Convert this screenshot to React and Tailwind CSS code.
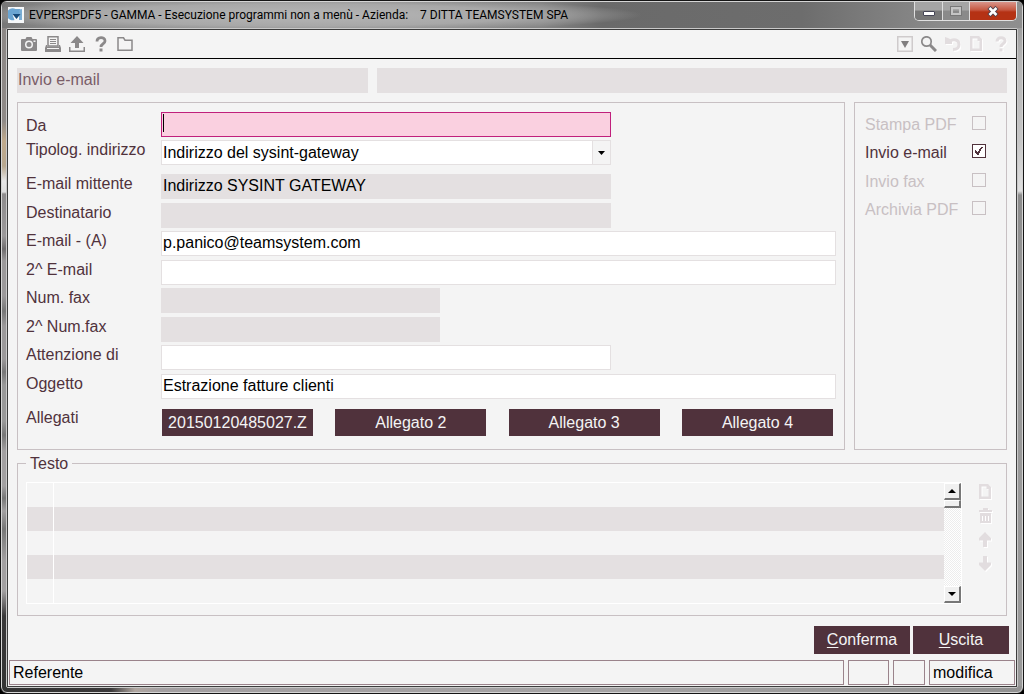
const frameBg =
  "bg-[linear-gradient(90deg,#333_0,#3b393a_110px,#b0a6a0_134px,#a39fa1_160px,#a5a3a4_60%,#929292_100%),linear-gradient(180deg,#8b8786_0,#8f8a87_120px,#c0aa8c_140px,#b8a890_165px,#e6e6e6_180px,#dedede_191px,#8e8c8d_193px,#9b999a_235px,#6f6d6e_248px,#9b999a_260px,#9b999a_295px,#777_310px,#9b999a_325px,#9b999a_358px,#777_371px,#999_384px,#999_420px,#777_434px,#a2a0a1_450px,#a2a0a1_485px,#777_497px,#a2a0a1_510px,#777_528px,#a2a0a1_560px,#a2a0a1_590px,#3a393a_615px,#333_100%),linear-gradient(180deg,#8c8c8c_0,#b5b5b5_60px,#c6c6c6_140px,#e0e0e0_190px,#8c8c8c_194px,#999_300px,#9a9a9a_100%)] bg-[length:100%_7px,8px_100%,100%_100%] bg-[position:bottom_left,top_left,top_left] bg-no-repeat";

const titleBg =
  "bg-[radial-gradient(ellipse_340px_17px_at_300px_13px,#b6b6b6_0,#a8a8a8_65%,transparent_100%),linear-gradient(90deg,#777_0,#8b8b8b_60px,#858585_540px,#6a6a6a_600px,#6d6d6d_800px,#8b8b8b_940px,#8e8e8e_100%)]";

const field = "h-[25px] min-w-0 border border-[#e4e0e1] bg-white pl-px text-black outline-none";
const readOnlyField = "h-[25px] min-w-0 bg-[#e4e0e1] pl-0.5 text-black outline-none";
const darkButton = "bg-[#50323c] text-center text-[#f4f4f4]";

const widths = {
  medium: "w-[450px]",
  small: "w-[279px]",
  full: "flex-1",
};

function Row({ id, label, gap = "mt-[3px]", low = false, children }) {
  return (
    <div className={`flex ${low ? "items-end" : "items-start"} ${gap}`}>
      <label htmlFor={id} className={`w-[135px] shrink-0 text-[#50323c] ${low ? "leading-[22px]" : "leading-[19px]"}`}>
        {label}
      </label>
      {children}
    </div>
  );
}

function TextRow({ id, label, gap, value = "", width = "full", readOnly = false }) {
  return (
    <Row id={id} label={label} gap={gap}>
      <input
        id={id}
        type="text"
        defaultValue={value}
        readOnly={readOnly}
        className={`${readOnly ? readOnlyField : field} pb-0.5 ${widths[width]}`}
      />
    </Row>
  );
}

function Option({ id, label, checked = false, gap = "" }) {
  return (
    <div className={`flex h-[25px] items-end ${gap}`}>
      <label htmlFor={id} className={`w-[107px] ${checked ? "text-[#50323c]" : "text-[#c8c0c3]"}`}>
        {label}
      </label>
      <span className="relative mb-[7px] flex">
        <input
          id={id}
          type="checkbox"
          defaultChecked={checked}
          disabled={!checked}
          className={`size-3.5 appearance-none border ${checked ? "border-[#50323c] bg-white" : "border-[#c8c0c3]"}`}
        />
        {checked && (
          <svg className="pointer-events-none absolute inset-0" width="14" height="14" viewBox="0 0 14 14">
            <path d="M3 6h1v1h1v1h1v-1h1v-2h1v-1h1v-1h2v1h-1v1h-1v2h-1v2h-1v2h-2v-1h-1v-1h-1z" fill="#50323c" />
          </svg>
        )}
      </span>
    </div>
  );
}

function Icon({ children, label, size = 16 }) {
  return (
    <button type="button" aria-label={label} className="block shrink-0">
      <svg width={size} height={size} viewBox="0 0 16 16" fill="none">
        {children}
      </svg>
    </button>
  );
}

const PAGE = "M1 0h9l3 3v12H1zM3.500 2.500v10h7V5H8.500V2.500z";

function PageIcon({ label }) {
  return (
    <Icon label={label}>
      <path d={PAGE} fill="#fff" fillRule="evenodd" transform="translate(1 1)" />
      <path d={PAGE} fill="#e2dddf" fillRule="evenodd" />
    </Icon>
  );
}

const UNDO = "M5 5.500C8 2.500 14 3.500 14 8.500C14 12 11.500 13.500 8 13.500";
const UNDO_HEAD = "M0 1l3 1l4 2v4H0z";
const HELP = "M4 5.500C4 0.500 12 0.500 12 5C12 8 8 7.500 8 11";
const TRASH = "M1 2h4V0h5v2h4v2H1zM2 5h11v10H2z";
const UP = "M7 0L13 6V8.500H9V15H5V8.500H1V6z";
const DOWN = "M7 15L13 9V6.500H9V0H5V6.500H1V9z";

function Toolbar() {
  return (
    <div className="flex h-[29px] items-center justify-between border-b border-black pr-[7px] pl-[13px]">
      <div className="flex gap-2">
        <Icon label="Cattura">
          <path fillRule="evenodd" fill="#8b898a" d="M1 3h3.500l1-2h5l1 2H15q1 0 1 1v10q0 1-1 1H1q-1 0-1-1V4q0-1 1-1zM8 4.500a4 4 0 1 0 0 8a4 4 0 1 0 0-8zM8 6a2.500 2.500 0 1 1 0 5a2.500 2.500 0 1 1 0-5z" />
          <path d="M12.500 4.500h2v1.500h-2z" fill="#f4f4f4" />
        </Icon>
        <Icon label="Stampa">
          <path d="M3 .750h10V10H3z" stroke="#8b898a" strokeWidth="1.500" />
          <path d="M5 3.500h6M5 5.500h6M5 7.500h6" stroke="#8b898a" />
          <path fillRule="evenodd" d="M1 9h1v1.500h12V9h1l1 3v4H0v-4zM2 12v1h12v-1z" fill="#8b898a" />
        </Icon>
        <Icon label="Esporta">
          <path d="M8 0l6.500 7h-4.500V12H6V7H1.500z" fill="#8b898a" />
          <path d="M.750 11v4.250h14.500V11" stroke="#8b898a" strokeWidth="1.500" />
        </Icon>
        <Icon label="Aiuto">
          <path d={HELP} stroke="#8b898a" strokeWidth="2.800" />
          <path d="M6.500 12.500h3V15.500h-3z" fill="#8b898a" />
        </Icon>
        <Icon label="Apri cartella">
          <path d="M1 14.250V1.750H6.500L8 4.250H15V14.250z" stroke="#8b898a" strokeWidth="1.500" />
        </Icon>
      </div>
      <div className="flex gap-2">
        <Icon label="Elenco">
          <path d="M.750.750h14.500v14.500H.750z" stroke="#cfcbcc" strokeWidth="1.500" />
          <path d="M4 5h8L8 12z" fill="#807e7f" />
        </Icon>
        <Icon label="Cerca">
          <circle cx="5.500" cy="5.500" r="4.700" stroke="#8b898a" strokeWidth="1.700" />
          <path d="M8.800 8.800L15 15" stroke="#8b898a" strokeWidth="3" />
        </Icon>
        <Icon label="Annulla">
          <g transform="translate(1 1)">
            <path d={UNDO} stroke="#fff" strokeWidth="3" />
            <path d={UNDO_HEAD} fill="#fff" />
          </g>
          <path d={UNDO} stroke="#e2dddf" strokeWidth="3" />
          <path d={UNDO_HEAD} fill="#e2dddf" />
        </Icon>
        <PageIcon label="Nuovo" />
        <Icon label="Guida">
          <g transform="translate(1 1)">
            <path d={HELP} stroke="#fff" strokeWidth="3" />
            <path d="M6.500 12.500h3V15.500h-3z" fill="#fff" />
          </g>
          <path d={HELP} stroke="#e2dddf" strokeWidth="3" />
          <path d="M6.500 12.500h3V15.500h-3z" fill="#e2dddf" />
        </Icon>
      </div>
    </div>
  );
}

function TitleBar() {
  return (
    <header className={`flex h-[26px] items-start justify-between pr-[5px] pl-1.5 ${titleBg}`}>
      <div className="flex h-[26px] items-center gap-[5px]">
        <svg width="16" height="16" viewBox="0 0 16 16">
          <path d="M0 0h16v16H0z" fill="#f5f7f9" />
          <path d="M7.500 2a6 6 0 1 0-1 11l-2-5.500h7l1-5.500z" fill="#6ba5d2" />
          <path d="M11 3l3-1v11h-3z" fill="#79add5" />
          <path d="M4.500 7h8l-4 5z" fill="#174a79" />
        </svg>
        <h1 className="flex gap-3 font-['Roboto','Open_Sans',sans-serif] text-xs text-black">
          <span>EVPERSPDF5 - GAMMA - Esecuzione programmi non a menù - Azienda:</span>
          <span>7 DITTA TEAMSYSTEM SPA</span>
        </h1>
      </div>
      <div className="flex h-[19px] overflow-hidden rounded-b-[5px] border border-t-0 border-[#e0e0e0]">
        <button type="button" aria-label="Riduci a icona" className="flex w-7 items-end justify-center border-r border-[#ddd] bg-linear-to-b from-[#a5a5a5] from-45% to-[#777] to-50% pb-1">
          <span className="h-[5px] w-3 rounded-[1px] border border-[#454555] bg-white" />
        </button>
        <button type="button" aria-label="Ingrandisci" className="flex w-[27px] items-center justify-center border-r border-[#ddd] bg-linear-to-b from-[#a5a5a5] from-45% to-[#8a8a8a] to-50%">
          <span className="h-2 w-2.5 border-2 border-[#c4c4c4] outline outline-[#777]" />
        </button>
        <button type="button" aria-label="Chiudi" className="flex w-[46px] items-center justify-center bg-linear-to-b from-[#d8948a] from-0% via-[#c5563f] via-45% to-[#b53214] to-55%">
          <svg width="12" height="11" viewBox="0 0 12 11">
            <path d="M2 1.500L10 9.500M10 1.500L2 9.500" stroke="#50424d" strokeWidth="4.500" />
            <path d="M2.500 2L9.500 9M9.500 2L2.500 9" stroke="#fff" strokeWidth="2.500" />
          </svg>
        </button>
      </div>
    </header>
  );
}

function Attachments() {
  return (
    <div className="mt-2.5 flex items-start">
      <span className="w-[136px] shrink-0 leading-[18px] text-[#50323c]">Allegati</span>
      <div className="flex flex-1 justify-between pr-[3px]">
        {["20150120485027.Z", "Allegato 2", "Allegato 3", "Allegato 4"].map((name) => (
          <button key={name} type="button" className={`h-[27px] w-[151px] ${darkButton}`}>
            {name}
          </button>
        ))}
      </div>
    </div>
  );
}

function ScrollButton({ label, children }) {
  return (
    <button type="button" aria-label={label} className="flex h-[17px] w-full items-center justify-center border-t border-r-2 border-b-2 border-l border-t-white border-r-[#777] border-b-[#777] border-l-white bg-[#f0f0f0]">
      {children}
    </button>
  );
}

function TextPanel() {
  return (
    <fieldset className="mt-[3px] min-w-0 border border-[#c8c0c3] pr-3 pb-[11px] pl-2">
      <legend className="px-1 leading-[21px] text-[#50323c]">Testo</legend>
      <div className="mt-2 flex justify-between">
        <div className="mr-4 flex flex-1 border border-white">
          <table className="flex-1 table-fixed border-collapse" aria-label="Testo">
            <tbody className="block">
              {[0, 1, 2, 3, 4].map((n) => (
                <tr key={n} className={`flex h-6 ${n % 2 ? "bg-[#e4e0e1]" : ""}`}>
                  <td className="w-[27px] border-r border-white" />
                  <td className="flex-1" />
                </tr>
              ))}
            </tbody>
          </table>
          <div className="flex w-[17px] flex-col justify-between bg-[repeating-conic-gradient(#ededed_0_25%,#fff_0_50%)] bg-[length:2px_2px]">
            <div>
              <ScrollButton label="Scorri su">
                <svg width="8" height="4" viewBox="0 0 8 4"><path d="M0 4L4 0L8 4z" fill="#000" /></svg>
              </ScrollButton>
              <div className="h-2 border-t border-r-2 border-b-2 border-l border-t-white border-r-[#777] border-b-[#777] border-l-white bg-[#f0f0f0]" />
            </div>
            <ScrollButton label="Scorri giù">
              <svg width="8" height="4" viewBox="0 0 8 4"><path d="M0 0L4 4L8 0z" fill="#000" /></svg>
            </ScrollButton>
          </div>
        </div>
        <div className="flex flex-col gap-2 pt-0.5">
          <PageIcon label="Nuova riga" />
          <Icon label="Elimina riga">
            <path d={TRASH} fill="#fff" transform="translate(1 1)" />
            <path d={TRASH} fill="#e2dddf" />
            <path d="M4.500 8v5M7.500 8v5M10.500 8v5" stroke="#fff" />
          </Icon>
          <Icon label="Sposta su">
            <path d={UP} fill="#fff" transform="translate(1 1)" />
            <path d={UP} fill="#e2dddf" />
          </Icon>
          <Icon label="Sposta giù">
            <path d={DOWN} fill="#fff" transform="translate(1 1)" />
            <path d={DOWN} fill="#e2dddf" />
          </Icon>
        </div>
      </div>
    </fieldset>
  );
}

export default function App() {
  return (
    <div className="flex min-h-screen flex-col bg-black font-['Liberation_Sans',Arial,sans-serif] text-base leading-6">
      <div className={`flex flex-1 flex-col overflow-hidden rounded-[7px] border border-[#151515] ${frameBg}`}>
        <div className="flex flex-1 flex-col rounded-md border border-[#d5d5d5]">
          <TitleBar />
          <div className="mx-1 mb-1 flex flex-1 flex-col rounded-[2px] border border-[#c9c9c9]">
            <div className="flex flex-1 flex-col border border-[#3c3c3c] bg-[#f4f4f4]">
              <Toolbar />
              <main className="flex flex-1 flex-col px-[9px] pt-[9px]">
                <div className="flex gap-[9px]">
                  <div className="h-[25px] w-[351px] bg-[#e4e0e1] pl-px text-[#7a5d68]">Invio e-mail</div>
                  <div className="h-[25px] flex-1 bg-[#e4e0e1]" />
                </div>
                <div className="mt-[9px] flex gap-[9px]">
                  <form className="flex-1 border border-[#c8c0c3] px-2 pt-[9px] pb-[13px]">
                    <Row id="da" label="Da" gap="" low>
                      <span className="relative flex">
                        <input id="da" type="text" className="h-[25px] w-[450px] border border-[#c0207c] bg-[#fad0e0] pl-1 text-black outline-none" />
                        <span className="absolute top-0.5 left-0.5 h-[18px] w-px bg-black" />
                      </span>
                    </Row>
                    <Row id="tipo" label="Tipolog. indirizzo">
                      <span className="relative flex">
                        <select id="tipo" className={`${field} w-[450px] appearance-none`}>
                          <option>Indirizzo del sysint-gateway</option>
                        </select>
                        <span className="pointer-events-none absolute inset-y-px right-px flex w-[18px] items-center justify-center border-l border-[#e4e0e1] bg-[#f4f4f4]">
                          <svg width="7" height="4" viewBox="0 0 7 4"><path d="M0 0h7L3.500 4z" fill="#000" /></svg>
                        </span>
                      </span>
                    </Row>
                    <TextRow id="mittente" label="E-mail mittente" value="Indirizzo SYSINT GATEWAY" width="medium" readOnly gap="mt-[9px]" />
                    <TextRow id="dest" label="Destinatario" width="medium" readOnly gap="mt-1" />
                    <TextRow id="email" label="E-mail - (A)" value="p.panico@teamsystem.com" />
                    <TextRow id="email2" label="2^ E-mail" gap="mt-1" />
                    <TextRow id="fax" label="Num. fax" width="small" readOnly />
                    <TextRow id="fax2" label="2^ Num.fax" width="small" readOnly gap="mt-1" />
                    <TextRow id="att" label="Attenzione di" width="medium" />
                    <TextRow id="ogg" label="Oggetto" value="Estrazione fatture clienti" gap="mt-1" />
                    <Attachments />
                  </form>
                  <aside className="w-[153px] border border-[#c8c0c3] pt-[9px] pl-2.5">
                    <Option id="stampa" label="Stampa PDF" />
                    <Option id="invio" label="Invio e-mail" checked gap="mt-[3px]" />
                    <Option id="invfax" label="Invio fax" gap="mt-1" />
                    <Option id="arch" label="Archivia PDF" gap="mt-[3px]" />
                  </aside>
                </div>
                <TextPanel />
              </main>
              <div className="mt-2.5 flex justify-end gap-[3px] pr-[7px]">
                <button type="button" className={`h-7 w-24 ${darkButton}`}><u className="underline-offset-2">C</u>onferma</button>
                <button type="button" className={`h-7 w-24 ${darkButton}`}><u className="underline-offset-2">U</u>scita</button>
              </div>
              <footer className="mt-1.5 mb-px flex gap-1 px-px text-black">
                <div className="h-[25px] flex-1 border border-[#9a838b] pl-[3px]">Referente</div>
                <div className="h-[25px] w-[41px] border border-[#9a838b]" />
                <div className="h-[25px] w-8 border border-[#9a838b]" />
                <div className="h-[25px] w-[86px] border border-[#9a838b] pl-[3px]">modifica</div>
              </footer>
            </div>
          </div>
        </div>
      </div>
    </div>
  );
}
